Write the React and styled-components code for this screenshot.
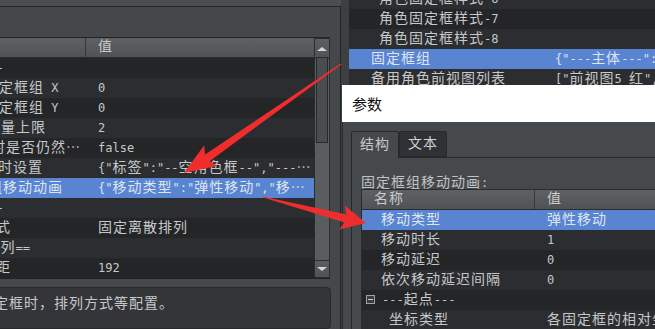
import React from "react";
import styled, { createGlobalStyle } from "styled-components";

const GlobalStyle = createGlobalStyle`
  html, body { margin: 0; padding: 0; background: #3d4042; }
  body {
    font-family: "DejaVu Sans Mono", "Noto Sans CJK SC", monospace;
    font-size: 12px;
    color: #c6c8ca;
  }
`;

const HAN = /([\u2026\u3000-\u9fff\uff00-\uffef]+)/;

const Han = styled.span`
  font-family: "Noto Sans CJK SC", sans-serif;
  font-size: 14px;
  letter-spacing: 1px;
  line-height: 1;
`;

const Txt = ({ children }) =>
  String(children)
    .split(HAN)
    .filter(Boolean)
    .map((part, i) => (HAN.test(part) ? <Han key={i}>{part}</Han> : part));

const leftRows = [
  { name: "---", pad: 42, value: "" },
  { name: "固定框组 X", pad: 44, value: "0" },
  { name: "固定框组 Y", pad: 44, value: "0" },
  { name: "数量上限", pad: 46, value: "2" },
  { name: "时是否仍然…", pad: 51, value: "false" },
  { name: "时设置", pad: 58, value: '{"标签":"--空角色框--","---…' },
  { name: "固定框组移动动画", pad: 3, value: '{"移动类型":"弹性移动","移…', selected: true },
  { name: "---", pad: 42, value: "" },
  { name: "排列方式", pad: 11, value: "固定离散排列" },
  { name: "==排列==", pad: 31, value: "" },
  { name: "间距", pad: 41, value: "192" },
];

const listRows = [
  { name: "角色固定框样式-6", pad: 30, value: "" },
  { name: "角色固定框样式-7", pad: 30, value: "" },
  { name: "角色固定框样式-8", pad: 30, value: "" },
  { name: "固定框组", pad: 22, value: '{"---主体---":{"X":0}}', selected: true },
  { name: "备用角色前视图列表", pad: 22, value: '["前视图5_红","前视图6"]' },
];

const treeRows = [
  { name: "移动类型", pad: 19, value: "弹性移动", selected: true },
  { name: "移动时长", pad: 19, value: "1" },
  { name: "移动延迟", pad: 19, value: "0" },
  { name: "依次移动延迟间隔", pad: 19, value: "0" },
  { name: "---起点---", pad: 4, value: "", group: true },
  { name: "坐标类型", pad: 27, value: "各固定框的相对坐标" },
];

const App = () => (
  <>
    <GlobalStyle />
    <Screen>
      <LeftPanel>
        <TopStrip />
        <Frame>
          <Toolbar />
          <Table>
            <Grid>
              <Header $cols="146px 1fr">
                <HeadCell $sep>
                  <Txt>名称</Txt>
                </HeadCell>
                <HeadCell $pad={12}>
                  <Txt>值</Txt>
                </HeadCell>
              </Header>
              {leftRows.map((r, i) => (
                <Row key={i} $cols="146px 1fr" $odd={i % 2 === 1} $selected={r.selected}>
                  <Cell $pad={r.pad}>
                    <Txt>{r.name}</Txt>
                  </Cell>
                  <Cell $pad={12}>
                    <Txt>{r.value}</Txt>
                  </Cell>
                </Row>
              ))}
            </Grid>
            <Scrollbar>
              <ScrollButton $h={19}>
                <Arrow $up />
              </ScrollButton>
              <Track>
                <Thumb />
              </Track>
              <ScrollButton $h={16}>
                <Arrow />
              </ScrollButton>
            </Scrollbar>
          </Table>
          <Description>
            <Txt>固定框时，排列方式等配置。</Txt>
          </Description>
        </Frame>
      </LeftPanel>

      <RightColumn>
        <List>
          {listRows.map((r, i) => (
            <Row key={i} $cols="194px 1fr" $odd={i % 2 === 0} $selected={r.selected}>
              <Cell $pad={r.pad}>
                <Txt>{r.name}</Txt>
              </Cell>
              <Cell $pad={12} $clip>
                <Txt>{r.value}</Txt>
              </Cell>
            </Row>
          ))}
        </List>
      </RightColumn>

      <Dialog>
        <TitleBar>参数</TitleBar>
        <DialogBody>
          <Tabs>
            <Tab $active>
              <Txt>结构</Txt>
            </Tab>
            <Tab>
              <Txt>文本</Txt>
            </Tab>
          </Tabs>
          <Pane>
            <PaneLabel>
              <Txt>固定框组移动动画:</Txt>
            </PaneLabel>
            <Tree>
              <Header $cols="173px 1fr">
                <HeadCell $sep $pad={12}>
                  <Txt>名称</Txt>
                </HeadCell>
                <HeadCell $pad={12}>
                  <Txt>值</Txt>
                </HeadCell>
              </Header>
              {treeRows.map((r, i) => (
                <Row key={i} $cols="173px 1fr" $odd={i % 2 === 1} $selected={r.selected}>
                  <Cell $pad={r.pad}>
                    {r.group && <Collapse />}
                    <Txt>{r.name}</Txt>
                  </Cell>
                  <Cell $pad={12} $clip>
                    <Txt>{r.value}</Txt>
                  </Cell>
                </Row>
              ))}
            </Tree>
          </Pane>
        </DialogBody>
      </Dialog>

      <Overlay viewBox="0 0 655 329" width="655" height="329">
        <polygon
          fill="#f02d2d"
          points="341.3,64.4 209.6,161.2 217.4,165.8 184,173 204.2,145.2 205,154.6 340.7,63.6"
        />
        <polygon
          fill="#f02d2d"
          points="263.1,197.5 344.6,222.4 339.2,229.6 366,223 344.6,205.6 346.8,214.4 262.9,196.5"
        />
      </Overlay>
    </Screen>
  </>
);

export default App;

const Screen = styled.div`
  position: relative;
  width: 655px;
  height: 329px;
  overflow: hidden;
  display: flex;
  background: #3d4042;
`;

const LeftPanel = styled.div`
  flex: 0 0 401px;
  margin-left: -60px;
  display: flex;
  flex-direction: column;
`;

const TopStrip = styled.div`
  height: 6px;
  background: #4b4e51;
`;

const Frame = styled.div`
  flex: 1;
  display: flex;
  flex-direction: column;
  background: #45484b;
  border-top: 1px solid #222426;
  border-right: 1px solid #222426;
  min-height: 0;
`;

const Toolbar = styled.div`
  height: 30px;
`;

const Table = styled.div`
  display: flex;
  width: 390px;
  height: 240px;
  border-top: 1px solid #222426;
  border-bottom: 1px solid #222426;
`;

const Grid = styled.div`
  flex: 1;
  min-width: 0;
  display: flex;
  flex-direction: column;
  background: #232527;
`;

const Header = styled.div`
  display: grid;
  grid-template-columns: ${(p) => p.$cols};
  height: 19px;
  border-bottom: 1px solid #2a2c2e;
  background: linear-gradient(#5e6164, #505356);
  color: #c9cbcd;
  line-height: 19px;
`;

const HeadCell = styled.div`
  padding-left: ${(p) => p.$pad || 0}px;
  border-right: ${(p) => (p.$sep ? "1px solid #35383a" : "none")};
  white-space: nowrap;
  overflow: hidden;
`;

const Row = styled.div`
  display: grid;
  grid-template-columns: ${(p) => p.$cols};
  height: 20px;
  line-height: 20px;
  flex: 0 0 20px;
  background: ${(p) => (p.$selected ? "#5884d2" : p.$odd ? "#2b2d30" : "#232527")};
  color: ${(p) => (p.$selected ? "#dfe5f0" : "#c6c8ca")};
`;

const Cell = styled.div`
  padding-left: ${(p) => p.$pad}px;
  white-space: nowrap;
  overflow: hidden;
  text-overflow: ${(p) => (p.$clip ? "clip" : "ellipsis")};
  min-width: 0;
`;

const Scrollbar = styled.div`
  flex: 0 0 16px;
  display: flex;
  flex-direction: column;
  background: #3c3f41;
`;

const ScrollButton = styled.div`
  height: ${(p) => p.$h}px;
  display: flex;
  align-items: center;
  justify-content: center;
  background: linear-gradient(#5c5f62, #505356);
  border: 1px solid #2a2c2e;
`;

const Arrow = styled.span`
  width: 0;
  height: 0;
  border-left: 5px solid transparent;
  border-right: 5px solid transparent;
  ${(p) => (p.$up ? "border-bottom: 4px solid #d4d6d8;" : "border-top: 4px solid #d4d6d8;")}
`;

const Track = styled.div`
  flex: 1;
  background: #5a5d60;
  border-left: 1px solid #2a2c2e;
  border-right: 1px solid #2a2c2e;
`;

const Thumb = styled.div`
  height: 84px;
  margin: -2px 1px 0;
  background: #4a4d50;
  border: 1px solid #27292b;
`;

const Description = styled.div`
  flex: 1;
  margin: 8px 9px 0 0;
  padding: 7px 0 0 38px;
  background: #333538;
  border: 1px solid #27292b;
  border-radius: 4px;
  line-height: 16px;
  color: #c6c8ca;
`;

const RightColumn = styled.div`
  flex: 1;
  margin-left: 8px;
  display: flex;
  flex-direction: column;
  min-width: 0;
`;

const List = styled.div`
  margin-top: -11px;
  width: 420px;
  display: flex;
  flex-direction: column;
`;

const Dialog = styled.div`
  position: absolute;
  left: 342px;
  top: 85px;
  width: 340px;
  height: 270px;
  display: flex;
  flex-direction: column;
`;

const TitleBar = styled.div`
  height: 37px;
  line-height: 37px;
  padding-left: 10px;
  background: #ffffff;
  color: #111;
  font-family: "Noto Sans CJK SC", sans-serif;
  font-size: 15px;
`;

const DialogBody = styled.div`
  flex: 1;
  padding: 9px 0 0 8px;
  background: #46494c;
  border-left: 1px solid #2b2d2f;
`;

const Tabs = styled.div`
  display: flex;
  align-items: flex-end;
  height: 26px;
`;

const Tab = styled.div`
  height: ${(p) => (p.$active ? 26 : 24)}px;
  line-height: ${(p) => (p.$active ? 26 : 24)}px;
  padding: 0 8px;
  margin-bottom: ${(p) => (p.$active ? -1 : 0)}px;
  position: relative;
  z-index: ${(p) => (p.$active ? 1 : 0)};
  background: ${(p) => (p.$active ? "#46494c" : "#2f3134")};
  color: ${(p) => (p.$active ? "#c6c8ca" : "#d0d2d4")};
  border: 1px solid #26282a;
  border-bottom: ${(p) => (p.$active ? "none" : "1px solid #26282a")};
  border-radius: 2px 2px 0 0;
`;

const Pane = styled.div`
  height: 200px;
  padding: 16px 0 0 9px;
  background: #46494c;
  border: 1px solid #26282a;
`;

const PaneLabel = styled.div`
  height: 15px;
  line-height: 15px;
  color: #c0c2c4;
`;

const Tree = styled.div`
  display: flex;
  flex-direction: column;
  border-top: 1px solid #2a2c2e;
  border-left: 1px solid #2a2c2e;
  background: #232527;
`;

const Collapse = styled.span`
  position: relative;
  display: inline-block;
  vertical-align: middle;
  width: 7px;
  height: 7px;
  margin: -2px 7px 0 0;
  border: 1px solid #a0a2a4;
  background: #3a3c3e;
  &::after {
    content: "";
    position: absolute;
    left: 1px;
    right: 1px;
    top: 3px;
    height: 1px;
    background: #d0d2d4;
  }
`;

const Overlay = styled.svg`
  position: absolute;
  left: 0;
  top: 0;
  pointer-events: none;
  z-index: 10;
`;
